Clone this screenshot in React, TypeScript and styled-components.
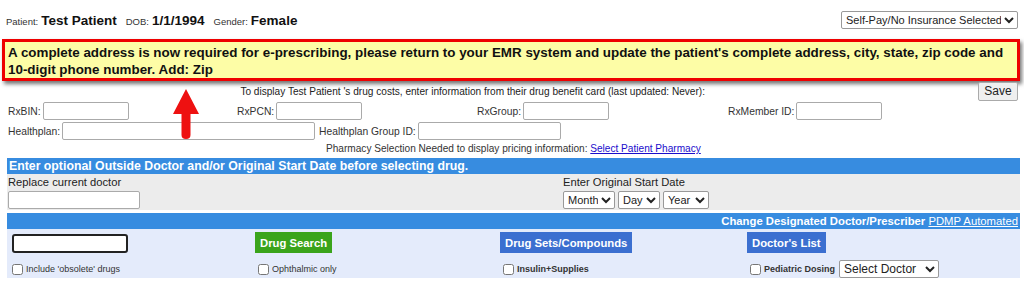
import styled, { createGlobalStyle } from "styled-components";

const Global = createGlobalStyle`
  body {
    margin: 0;
    background: #fff;
    font-family: "Liberation Sans", Arial, sans-serif;
    color: #222;
  }
`;

const App = () => {
  return (
    <Page>
      <Global />
      <Header>
        <Who>
          <Small>Patient:</Small>
          <Big>Test Patient</Big>
          <Small>DOB:</Small>
          <Big>1/1/1994</Big>
          <Small>Gender:</Small>
          <Big>Female</Big>
        </Who>
        <Select $fs={11} $w={177}>
          <option>Self-Pay/No Insurance Selected</option>
        </Select>
      </Header>

      <Alert>
        A complete address is now required for e-prescribing, please return to your EMR system and update
        the patient's complete address, city, state, zip code and 10-digit phone number. Add: Zip
      </Alert>

      <Benefit>
        <Arrow width="26" height="50" viewBox="0 0 26 50">
          <path d="M13 0 L26 25 L17.5 25 L17.5 46 Q17.5 50 13 50 Q8.5 50 8.5 46 L8.5 25 L0 25 Z" fill="#ee1111" />
        </Arrow>
        <InfoLine>
          <span>To display Test Patient 's drug costs, enter information from their drug benefit card (last updated: Never):</span>
          <SaveButton>Save</SaveButton>
        </InfoLine>
        <CardRow $cols="229px 240px 251px 1fr">
          <Field><Label>RxBIN:</Label><Input $w={86} /></Field>
          <Field><Label>RxPCN:</Label><Input $w={86} /></Field>
          <Field><Label>RxGroup:</Label><Input $w={86} /></Field>
          <Field><Label>RxMember ID:</Label><Input $w={86} /></Field>
        </CardRow>
        <CardRow $cols="311px 1fr">
          <Field><Label>Healthplan:</Label><Input $w={253} /></Field>
          <Field><Label>Healthplan Group ID:</Label><Input $w={143} /></Field>
        </CardRow>
        <PharmacyLine>
          Pharmacy Selection Needed to display pricing information: <Link>Select Patient Pharmacy</Link>
        </PharmacyLine>
      </Benefit>

      <Section $gap={2}>
        <BlueBar>Enter optional Outside Doctor and/or Original Start Date before selecting drug.</BlueBar>
        <GrayPanel>
          <Stack>
            <Caption>Replace current doctor</Caption>
            <Input $w={132} />
          </Stack>
          <Stack>
            <Caption>Enter Original Start Date</Caption>
            <Selects>
              <Select $fs={11} $w={52}><option>Month</option></Select>
              <Select $fs={11} $w={42}><option>Day</option></Select>
              <Select $fs={11} $w={46}><option>Year</option></Select>
            </Selects>
          </Stack>
        </GrayPanel>
      </Section>

      <Section $gap={3}>
        <BlueBar $right>
          Change Designated Doctor/Prescriber <BarLink>PDMP Automated</BarLink>
        </BlueBar>
        <DrugPanel>
          <Cell><SearchInput /></Cell>
          <Cell><Action $bg="#3aa41b">Drug Search</Action></Cell>
          <Cell><Action $bg="#3b6fd0">Drug Sets/Compounds</Action></Cell>
          <Cell><Action $bg="#3b6fd0">Doctor's List</Action></Cell>
          <Cell><Check><Box type="checkbox" />Include 'obsolete' drugs</Check></Cell>
          <Cell><Check $shift><Box type="checkbox" />Ophthalmic only</Check></Cell>
          <Cell><Check $shift $bold><Box type="checkbox" />Insulin+Supplies</Check></Cell>
          <Cell>
            <Check $shift $bold><Box type="checkbox" />Pediatric Dosing</Check>
            <Select $fs={12} $w={100}><option>Select Doctor</option></Select>
          </Cell>
        </DrugPanel>
      </Section>
    </Page>
  );
};

const Page = styled.div`
  width: 1024px;
  padding: 0 4px 0 2px;
  box-sizing: border-box;
`;
const Header = styled.div`
  display: flex;
  justify-content: space-between;
  align-items: center;
  height: 39px;
  padding: 0 2px 0 4px;
`;
const Who = styled.div`
  display: flex;
  align-items: baseline;
  gap: 3px;
  padding-top: 1px;
`;
const Small = styled.span`
  font-size: 9.5px;
  color: #333;
`;
const Big = styled.span`
  font-size: 13.5px;
  font-weight: bold;
  color: #111;
  margin-right: 6px;
`;
const Select = styled.select<{ $fs: number; $w?: number }>`
  ${(p) => (p.$w ? `width: ${p.$w}px;` : "")}
  height: 18px;
  font-family: "Liberation Sans", Arial, sans-serif;
  font-size: ${(p) => p.$fs}px;
  border: 1px solid #999;
  border-radius: 2px;
  background: #fff;
  color: #222;
  padding: 0;
`;
const Alert = styled.div`
  border: 3px solid #ee0000;
  background: #fdfda6;
  box-shadow: 2px 3px 4px rgba(0, 0, 0, 0.55);
  padding: 2px 3px 0 3px;
  font-size: 13.4px;
  font-weight: bold;
  line-height: 17px;
  color: #111;
`;
const Benefit = styled.div`
  position: relative;
`;
const Arrow = styled.svg`
  position: absolute;
  left: 171px;
  top: 8px;
`;
const InfoLine = styled.div`
  display: flex;
  justify-content: flex-end;
  align-items: center;
  gap: 273px;
  font-size: 10.1px;
  color: #222;
  height: 20px;
  padding-right: 2px;
`;
const SaveButton = styled.button`
  font-family: "Liberation Sans", Arial, sans-serif;
  font-size: 12px;
  height: 19px;
  width: 40px;
  padding: 0;
  border: 1px solid #aaa;
  border-radius: 2px;
  background: #efefef;
  color: #222;
`;
const CardRow = styled.div<{ $cols: string }>`
  display: grid;
  grid-template-columns: ${(p) => p.$cols};
  padding-left: 6px;
  height: 20px;
  align-items: center;
`;
const Field = styled.div`
  display: flex;
  align-items: center;
  gap: 2px;
`;
const Label = styled.span`
  font-size: 10.3px;
  color: #333;
`;
const Input = styled.input<{ $w: number }>`
  width: ${(p) => p.$w}px;
  height: 18px;
  box-sizing: border-box;
  border: 1px solid #aaa;
  border-radius: 2px;
  padding: 0;
  background: #fff;
`;
const PharmacyLine = styled.div`
  font-size: 10.1px;
  color: #333;
  padding-left: 324px;
  height: 15px;
  line-height: 15px;
`;
const Link = styled.a`
  color: #1a0dcc;
  text-decoration: underline;
`;
const Section = styled.div<{ $gap: number }>`
  margin-left: 5px;
  margin-top: ${(p) => p.$gap}px;
`;
const BlueBar = styled.div<{ $right?: boolean }>`
  background: #378ce0;
  color: #fff;
  font-weight: bold;
  font-size: ${(p) => (p.$right ? "11.3px" : "12.3px")};
  height: 16px;
  line-height: 16px;
  padding: 0 2px;
  text-align: ${(p) => (p.$right ? "right" : "left")};
  white-space: nowrap;
  overflow: hidden;
`;
const BarLink = styled.a`
  color: #fff;
  font-weight: normal;
  text-decoration: underline;
`;
const GrayPanel = styled.div`
  background: #ececec;
  display: grid;
  grid-template-columns: 555px 1fr;
  height: 36px;
  padding: 2px 0 0 1px;
  box-sizing: border-box;
`;
const Stack = styled.div`
  display: flex;
  flex-direction: column;
  gap: 2px;
`;
const Caption = styled.div`
  font-size: 11.2px;
  color: #222;
  line-height: 13px;
`;
const Selects = styled.div`
  display: flex;
  gap: 3px;
`;
const DrugPanel = styled.div`
  background: #e4ebfb;
  display: grid;
  grid-template-columns: 243px 245px 247px 1fr;
  grid-template-rows: 27px 20px;
  padding: 3px 0 0 5px;
  height: 49px;
  box-sizing: border-box;
`;
const Cell = styled.div`
  display: flex;
  align-items: center;
  gap: 4px;
`;
const SearchInput = styled.input`
  width: 116px;
  height: 19px;
  box-sizing: border-box;
  border: 2px solid #222;
  border-radius: 3px;
  padding: 0;
  align-self: flex-start;
  margin-top: 2px;
`;
const Action = styled.button<{ $bg: string }>`
  background: ${(p) => p.$bg};
  color: #fff;
  border: none;
  font-family: "Liberation Sans", Arial, sans-serif;
  font-weight: bold;
  font-size: 11.3px;
  height: 21px;
  padding: 0 5px;
  align-self: flex-start;
`;
const Check = styled.label<{ $bold?: boolean; $shift?: boolean }>`
  display: flex;
  align-items: center;
  gap: 3px;
  margin-left: ${(p) => (p.$shift ? "3px" : "0")};
  font-size: 9px;
  font-weight: ${(p) => (p.$bold ? "bold" : "normal")};
  color: #333;
`;
const Box = styled.input`
  margin: 0;
  width: 11px;
  height: 11px;
`;

export default App;
